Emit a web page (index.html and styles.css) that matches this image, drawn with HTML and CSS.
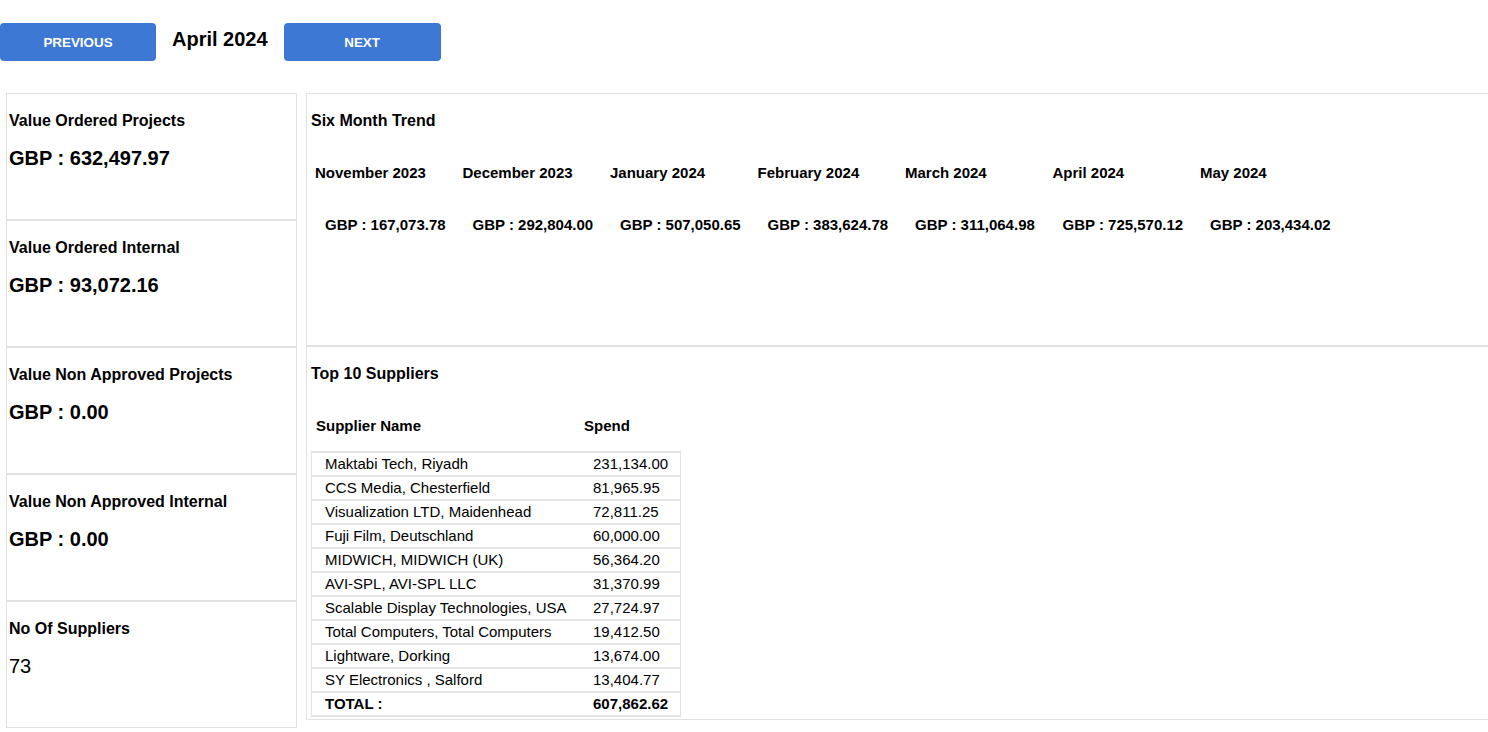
FILE: index.html
```html
<!DOCTYPE html>
<html lang="en">
<head>
<meta charset="utf-8">
<title>Dashboard</title>
<link rel="stylesheet" href="styles.css">
</head>
<body>
<div class="toolbar">
  <button class="btn btn-prev">PREVIOUS</button>
  <h2 class="period">April 2024</h2>
  <button class="btn btn-next">NEXT</button>
</div>
<div class="main">
  <div class="left">
    <div class="card"><div class="card-title">Value Ordered Projects</div><div class="card-value">GBP : 632,497.97</div></div>
    <div class="card"><div class="card-title">Value Ordered Internal</div><div class="card-value">GBP : 93,072.16</div></div>
    <div class="card"><div class="card-title">Value Non Approved Projects</div><div class="card-value">GBP : 0.00</div></div>
    <div class="card"><div class="card-title">Value Non Approved Internal</div><div class="card-value">GBP : 0.00</div></div>
    <div class="card"><div class="card-title">No Of Suppliers</div><div class="card-value card-value-plain">73</div></div>
  </div>
  <div class="right">
    <div class="section trend">
      <div class="section-title">Six Month Trend</div>
      <div class="trend-grid">
        <div class="month">November 2023</div>
        <div class="month">December 2023</div>
        <div class="month">January 2024</div>
        <div class="month">February 2024</div>
        <div class="month">March 2024</div>
        <div class="month">April 2024</div>
        <div class="month">May 2024</div>
        <div class="amount">GBP : 167,073.78</div>
        <div class="amount">GBP : 292,804.00</div>
        <div class="amount">GBP : 507,050.65</div>
        <div class="amount">GBP : 383,624.78</div>
        <div class="amount">GBP : 311,064.98</div>
        <div class="amount">GBP : 725,570.12</div>
        <div class="amount">GBP : 203,434.02</div>
      </div>
    </div>
    <div class="section suppliers">
      <div class="section-title">Top 10 Suppliers</div>
      <div class="sup-head"><span class="sh-name">Supplier Name</span><span class="sh-spend">Spend</span></div>
      <table class="sup-table">
        <tr><td class="c-name">Maktabi Tech, Riyadh</td><td class="c-spend">231,134.00</td></tr>
        <tr><td class="c-name">CCS Media, Chesterfield</td><td class="c-spend">81,965.95</td></tr>
        <tr><td class="c-name">Visualization LTD, Maidenhead</td><td class="c-spend">72,811.25</td></tr>
        <tr><td class="c-name">Fuji Film, Deutschland</td><td class="c-spend">60,000.00</td></tr>
        <tr><td class="c-name">MIDWICH, MIDWICH (UK)</td><td class="c-spend">56,364.20</td></tr>
        <tr><td class="c-name">AVI-SPL, AVI-SPL LLC</td><td class="c-spend">31,370.99</td></tr>
        <tr><td class="c-name">Scalable Display Technologies, USA</td><td class="c-spend">27,724.97</td></tr>
        <tr><td class="c-name">Total Computers, Total Computers</td><td class="c-spend">19,412.50</td></tr>
        <tr><td class="c-name">Lightware, Dorking</td><td class="c-spend">13,674.00</td></tr>
        <tr><td class="c-name">SY Electronics , Salford</td><td class="c-spend">13,404.77</td></tr>
        <tr class="total"><td class="c-name">TOTAL :</td><td class="c-spend">607,862.62</td></tr>
      </table>
    </div>
  </div>
</div>
</body>
</html>
```
FILE: styles.css
```css
* { box-sizing: border-box; }
html, body { margin: 0; padding: 0; background: #fff; }
body {
  font-family: "Liberation Sans", Arial, sans-serif;
  color: #000;
  overflow: hidden;
}
.toolbar {
  display: flex;
  align-items: center;
  padding-top: 23px;
  height: 61px;
}
.btn {
  height: 38px;
  border: none;
  border-radius: 4px;
  background: #3c78d4;
  color: #fff;
  font-family: "Liberation Sans", Arial, sans-serif;
  font-weight: bold;
  font-size: 13.4px;
  padding: 0;
}
.btn-prev { width: 156px; }
.btn-next { width: 157px; }
.period {
  margin: 0 16px;
  font-size: 20px;
  font-weight: bold;
  position: relative;
  top: -3px;
}
.main {
  display: flex;
  margin-top: 32px;
  align-items: flex-start;
}
.left {
  width: 291px;
  margin-left: 6px;
  margin-right: 9px;
  flex: none;
}
.card {
  height: 127px;
  border: 1px solid #e2e2e2;
  padding: 18px 2px 0 2px;
}
.card-title {
  font-size: 16px;
  font-weight: bold;
  line-height: 18px;
}
.card-value {
  margin-top: 17px;
  font-size: 20px;
  font-weight: bold;
  line-height: 23px;
}
.card-value-plain { font-weight: normal; }
.right {
  flex: 1;
}
.section {
  border: 1px solid #e2e2e2;
  border-right: none;
  padding: 18px 4px 0 4px;
}
.trend { height: 253px; }
.section-title {
  font-size: 16px;
  font-weight: bold;
  line-height: 18px;
}
.trend-grid {
  display: grid;
  grid-template-columns: repeat(7, 147.5px);
  margin-top: 34px;
  row-gap: 35px;
}
.month {
  font-size: 15px;
  font-weight: bold;
  line-height: 17px;
  padding-left: 4px;
}
.amount {
  font-size: 15px;
  font-weight: bold;
  line-height: 17px;
  padding-left: 14px;
}
.suppliers { height: 374px; }
.sup-head {
  display: flex;
  margin-top: 34px;
  font-size: 15px;
  font-weight: bold;
  line-height: 17px;
}
.sh-name { width: 268px; padding-left: 5px; }
.sh-spend { padding-left: 5px; }
.sup-table {
  margin-top: 17px;
  border-collapse: separate;
  border-spacing: 0;
  border: 1px solid #e2e2e2;
  width: 370px;
  font-size: 15px;
  line-height: 20px;
}
.sup-table td {
  border-top: 1px solid #e6e6e6;
  border-bottom: 1px solid #e6e6e6;
  padding: 1px 0 1px 13px;
  height: 24px;
}
.c-name { width: 268px; }
.total td { font-weight: bold; }
```
